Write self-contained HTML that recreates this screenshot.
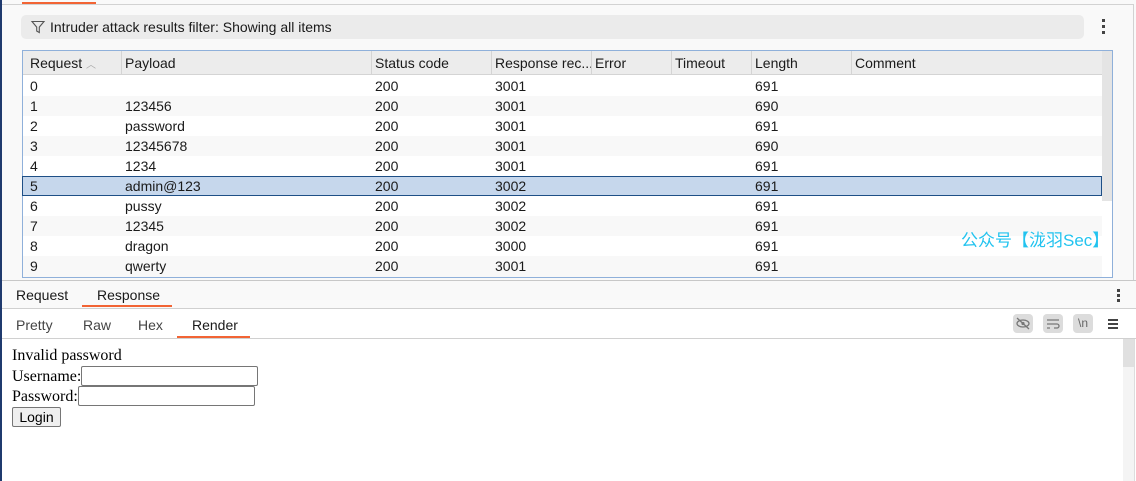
<!DOCTYPE html>
<html><head><meta charset="utf-8"><style>
*{box-sizing:border-box;margin:0;padding:0}
body{width:1136px;height:481px;overflow:hidden;background:#fff;font-family:"Liberation Sans","Noto Sans CJK SC",sans-serif;font-size:14px;color:#1a1a1a;position:relative}
.abs{position:absolute}
.top{left:0;top:0;width:1136px;height:280px;background:#f9f9f9}
.row{position:absolute;left:23px;width:1079px;height:20px;line-height:21px}
.c{position:absolute;top:0;white-space:nowrap}
</style></head><body>
<div class="abs top"></div>
<div class="abs" style="left:0;top:0;width:2px;height:481px;background:#1f3a6e"></div>
<div class="abs" style="left:2px;top:4px;width:1132px;height:1px;background:#d2d2d2"></div>
<div class="abs" style="left:22px;top:2px;width:74px;height:2px;background:#f26434"></div>
<div class="abs" style="left:1133px;top:4px;width:1px;height:276px;background:#d2d2d2"></div>
<div class="abs" style="left:21px;top:15px;width:1063px;height:24px;background:#ebebeb;border-radius:5px"></div>
<svg class="abs" style="left:30px;top:19px" width="16" height="16" viewBox="0 0 16 16"><path d="M2 2.5h12l-4.7 5.6v5.4l-2.6-1.5V8.1z" fill="none" stroke="#555" stroke-width="1.1"/></svg>
<div class="abs" style="left:50px;top:19px;line-height:17px;font-size:14px">Intruder attack results filter: Showing all items</div>
<div class="abs" style="left:1102px;top:19px;width:3px;height:3px;background:#444;box-shadow:0 6px #444,0 12px #444"></div>
<div class="abs" style="left:22px;top:50px;width:1091px;height:228px;border:1px solid #8fb0da;background:#fff"></div>
<div class="abs" style="left:23px;top:51px;width:1079px;height:24px;background:#ececec;border-bottom:1px solid #d4d4d4"></div>
<div class="abs" style="left:1102px;top:51px;width:10px;height:150px;background:#e4e4e4"></div>
<div class="abs" style="left:23px;top:51px;height:24px;line-height:25px;width:1079px">
<span class="c" style="left:7px">Request <span style="color:#aaa;font-size:10px">︿</span></span>
<span class="c" style="left:102px">Payload</span><span class="c" style="left:352px">Status code</span><span class="c" style="left:472px">Response rec...</span><span class="c" style="left:572px">Error</span><span class="c" style="left:652px">Timeout</span><span class="c" style="left:732px">Length</span><span class="c" style="left:832px">Comment</span></div>
<div class="abs" style="left:121px;top:51px;width:1px;height:24px;background:#d4d4d4;box-shadow:250px 0 #d4d4d4,370px 0 #d4d4d4,470px 0 #d4d4d4,550px 0 #d4d4d4,630px 0 #d4d4d4,730px 0 #d4d4d4"></div>

<div class="row" style="top:76px"><span class="c" style="left:7px">0</span><span class="c" style="left:102px"></span><span class="c" style="left:352px">200</span><span class="c" style="left:472px">3001</span><span class="c" style="left:732px">691</span></div>
<div class="row" style="top:96px;background:#f8f8f8"><span class="c" style="left:7px">1</span><span class="c" style="left:102px">123456</span><span class="c" style="left:352px">200</span><span class="c" style="left:472px">3001</span><span class="c" style="left:732px">690</span></div>
<div class="row" style="top:116px"><span class="c" style="left:7px">2</span><span class="c" style="left:102px">password</span><span class="c" style="left:352px">200</span><span class="c" style="left:472px">3001</span><span class="c" style="left:732px">691</span></div>
<div class="row" style="top:136px;background:#f8f8f8"><span class="c" style="left:7px">3</span><span class="c" style="left:102px">12345678</span><span class="c" style="left:352px">200</span><span class="c" style="left:472px">3001</span><span class="c" style="left:732px">690</span></div>
<div class="row" style="top:156px"><span class="c" style="left:7px">4</span><span class="c" style="left:102px">1234</span><span class="c" style="left:352px">200</span><span class="c" style="left:472px">3001</span><span class="c" style="left:732px">691</span></div>
<div class="row" style="top:176px;left:22px;width:1080px;background:#c6d7ec;border:1px solid #1e4f86;line-height:19px"><span class="c" style="left:7px">5</span><span class="c" style="left:102px">admin@123</span><span class="c" style="left:352px">200</span><span class="c" style="left:472px">3002</span><span class="c" style="left:732px">691</span></div>
<div class="row" style="top:196px"><span class="c" style="left:7px">6</span><span class="c" style="left:102px">pussy</span><span class="c" style="left:352px">200</span><span class="c" style="left:472px">3002</span><span class="c" style="left:732px">691</span></div>
<div class="row" style="top:216px;background:#f8f8f8"><span class="c" style="left:7px">7</span><span class="c" style="left:102px">12345</span><span class="c" style="left:352px">200</span><span class="c" style="left:472px">3002</span><span class="c" style="left:732px">691</span></div>
<div class="row" style="top:236px"><span class="c" style="left:7px">8</span><span class="c" style="left:102px">dragon</span><span class="c" style="left:352px">200</span><span class="c" style="left:472px">3000</span><span class="c" style="left:732px">691</span><span class="c" style="left:938px;color:#22c3ef;font-size:17px;top:-6px">公众号【泷羽Sec】</span></div>
<div class="row" style="top:256px;background:#f8f8f8;height:21px"><span class="c" style="left:7px">9</span><span class="c" style="left:102px">qwerty</span><span class="c" style="left:352px">200</span><span class="c" style="left:472px">3001</span><span class="c" style="left:732px">691</span></div>

<div class="abs" style="left:2px;top:280px;width:1134px;height:1px;background:#c8c8c8"></div>
<div class="abs" style="left:2px;top:281px;width:1134px;height:28px;background:#f9f9f9;border-bottom:1px solid #d0d0d0"></div>
<div class="abs" style="left:16px;top:287px;line-height:17px">Request</div>
<div class="abs" style="left:97px;top:287px;line-height:17px">Response</div>
<div class="abs" style="left:82px;top:305px;width:90px;height:2px;background:#f26434"></div>
<div class="abs" style="left:1117px;top:289px;width:3px;height:3px;background:#444;box-shadow:0 5px #444,0 10px #444"></div>
<div class="abs" style="left:2px;top:338px;width:1134px;height:1px;background:#d0d0d0"></div>
<div class="abs" style="left:16px;top:317px;line-height:17px;color:#444">Pretty</div>
<div class="abs" style="left:83px;top:317px;line-height:17px;color:#444">Raw</div>
<div class="abs" style="left:138px;top:317px;line-height:17px;color:#444">Hex</div>
<div class="abs" style="left:192px;top:317px;line-height:17px">Render</div>
<div class="abs" style="left:177px;top:336px;width:73px;height:2px;background:#f26434"></div>
<div class="abs" style="left:1013px;top:314px;width:20px;height:19px;background:#dcdcdc;border-radius:4px"></div>
<svg class="abs" style="left:1013px;top:314px" width="20" height="19"><ellipse cx="10" cy="9.5" rx="6" ry="3.5" fill="none" stroke="#777" stroke-width="1.3"/><circle cx="10" cy="9.5" r="1.6" fill="#777"/><path d="M4 4l12 11" stroke="#777" stroke-width="1.3"/></svg>
<div class="abs" style="left:1043px;top:314px;width:20px;height:19px;background:#dcdcdc;border-radius:4px"></div>
<svg class="abs" style="left:1043px;top:314px" width="20" height="19"><path d="M4 6h12M4 10h10a2 2 0 010 4h-3M4 14h3" fill="none" stroke="#777" stroke-width="1.3"/></svg>
<div class="abs" style="left:1073px;top:314px;width:20px;height:19px;background:#dcdcdc;border-radius:4px;color:#666;font-size:12px;line-height:19px;text-align:center">\n</div>
<div class="abs" style="left:1108px;top:319px;width:10px;height:2px;background:#444;box-shadow:0 4px #444,0 8px #444"></div>
<div class="abs" style="left:1123px;top:339px;width:11px;height:142px;background:#f4f4f4"></div>
<div class="abs" style="left:1123px;top:339px;width:11px;height:28px;background:#e0e0e0"></div>
<div class="abs" style="left:1134px;top:339px;width:1px;height:142px;background:#ddd"></div>
<div class="abs" style="left:12px;top:346px;font-family:'Liberation Serif',serif;font-size:16px;line-height:20px;color:#000">
<div>Invalid password</div>
<div style="height:20px">Username:<span style="display:inline-block;width:177px;height:20px;border:1px solid #767676;border-radius:2px;vertical-align:-5px"></span></div>
<div style="height:21px">Password:<span style="display:inline-block;width:177px;height:20px;border:1px solid #767676;border-radius:2px;vertical-align:-5px"></span></div>
<div style="display:inline-block;width:49px;height:20px;border:1px solid #767676;border-radius:2px;background:#efefef;font-family:'Liberation Sans',sans-serif;font-size:14px;line-height:18px;text-align:center">Login</div>
</div>
</body></html>
